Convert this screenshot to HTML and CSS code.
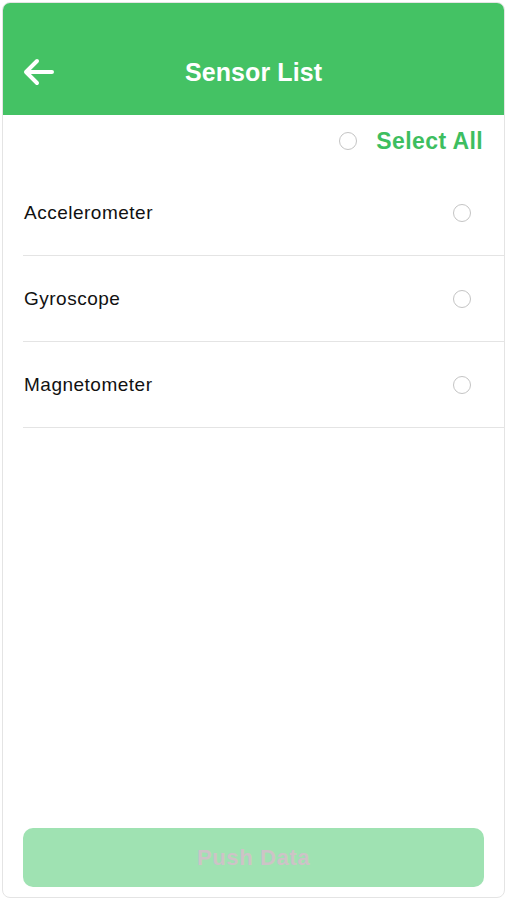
FILE: index.html
```html
<!DOCTYPE html>
<html lang="en">
<head>
<meta charset="utf-8">
<title>Sensor List</title>
<link rel="stylesheet" href="styles.css">
</head>
<body>
<div class="phone">
  <header class="header">
    <button class="back" aria-label="Back">
      <svg width="32" height="28" viewBox="0 0 32 28" fill="none" stroke="#fff" stroke-width="4" stroke-linecap="round" stroke-linejoin="round">
        <path d="M29 14H3M14 3L3 14l11 11"/>
      </svg>
    </button>
    <h1 class="title">Sensor List</h1>
  </header>
  <div class="select-all">
    <span class="radio"></span>
    <span class="select-label">Select All</span>
  </div>
  <ul class="list">
    <li class="row"><span class="name">Accelerometer</span><span class="radio"></span></li>
    <li class="row"><span class="name">Gyroscope</span><span class="radio"></span></li>
    <li class="row"><span class="name">Magnetometer</span><span class="radio"></span></li>
  </ul>
  <div class="spacer"></div>
  <div class="footer">
    <button class="push" disabled>Push Data</button>
  </div>
</div>
</body>
</html>
```

FILE: styles.css
```css
* { box-sizing: border-box; }
html, body { margin: 0; padding: 0; background: #fff; }
body { font-family: "Liberation Sans", Arial, sans-serif; }
.phone {
  margin: 2px;
  height: 896px;
  border: 1px solid #e4e4e4;
  border-radius: 8px;
  overflow: hidden;
  display: flex;
  flex-direction: column;
  background: #fff;
}
.header {
  height: 112px;
  padding-top: 26px;
  background: #44c264;
  display: flex;
  align-items: center;
  justify-content: center;
  position: relative;
  flex-shrink: 0;
}
.back {
  position: absolute;
  left: 20px;
  top: 55px;
  background: none;
  border: 0;
  padding: 0;
  width: 32px;
  height: 28px;
  display: block;
}
.back svg { display: block; }
.title {
  margin: 0;
  color: #fff;
  font-size: 25px;
  font-weight: bold;
  letter-spacing: 0.1px;
}
.select-all {
  height: 55px;
  display: flex;
  align-items: center;
  justify-content: flex-end;
  gap: 19px;
  padding-right: 21px;
  padding-bottom: 3px;
  flex-shrink: 0;
}
.select-label {
  color: #3dbe60;
  font-size: 23px;
  font-weight: bold;
  letter-spacing: 0.4px;
}
.radio {
  width: 18px;
  height: 18px;
  border: 1px solid #c4c4c4;
  border-radius: 50%;
  display: inline-block;
  flex-shrink: 0;
}
.list {
  list-style: none;
  margin: 0 0 0 20px;
  padding: 0;
}
.row {
  height: 86px;
  border-bottom: 1px solid #e4e4e4;
  display: flex;
  align-items: center;
  justify-content: space-between;
  padding: 1px 33px 0 1px;
}
.name {
  font-size: 19px;
  color: #111;
  letter-spacing: 0.5px;
}
.spacer { flex: 1; }
.footer {
  padding: 0 20px 10px 20px;
  flex-shrink: 0;
}
.push {
  width: 100%;
  height: 59px;
  border: 0;
  border-radius: 10px;
  background: #9fe2b2;
  color: #cdc3c7;
  font-family: "Liberation Sans", Arial, sans-serif;
  font-size: 22px;
  font-weight: bold;
  letter-spacing: 0.6px;
}
```
